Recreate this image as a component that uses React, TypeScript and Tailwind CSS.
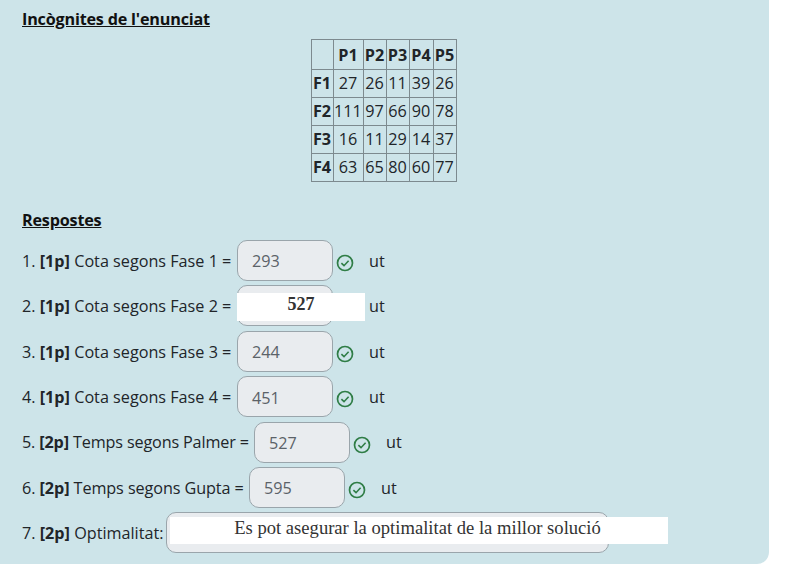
const rows = [
  ["F1", "27", "26", "11", "39", "26"],
  ["F2", "111", "97", "66", "90", "78"],
  ["F3", "16", "11", "29", "14", "37"],
  ["F4", "63", "65", "80", "60", "77"],
];
const heads = ["", "P1", "P2", "P3", "P4", "P5"];
const widths = ["w-[22px]", "w-[30px]", "w-[23px]", "w-[23px]", "w-[24px]", "w-[23px]"];

function Check() {
  return (
    <svg width="18" height="18" viewBox="0 0 18 18" fill="none" className="shrink-0 mt-[5px]">
      <circle cx="9" cy="9" r="7.5" stroke="#2f7d46" strokeWidth="1.7" />
      <path d="M5.4 9.2 L8 11.7 L12.6 6.8" stroke="#2f7d46" strokeWidth="1.6" />
    </svg>
  );
}

function Row({ n, p, label, value, cover, labelClass }: { n: number; p: string; label: string; value: string; cover?: boolean; labelClass: string }) {
  return (
    <div className="flex items-center h-[41px] whitespace-nowrap">
      <span className={`pt-[1px] ${labelClass}`}>
        {n}. <b>[{p}p]</b> {label}
      </span>
      <div className="relative ml-[5px] flex items-center">
        <div className="w-[96px] h-[41px] rounded-[10px] border border-[#9aa5ab] bg-[#e9ecef] pl-[14px] pt-[2px] flex items-center text-[#5b6268]">
          {value}
        </div>
        {cover ? (
          <div className="absolute left-0 top-[8px] w-[128px] h-[28px] bg-white flex items-center justify-center font-['Liberation_Serif',serif] font-bold text-[#333] text-[18px] pb-[6px]">
            527
          </div>
        ) : null}
      </div>
      <div className="w-[36px] pl-[3px] flex">{cover ? null : <Check />}</div>
      <span className="pt-[1px]">ut</span>
    </div>
  );
}

export default function App() {
  return (
    <div className="w-[795px] h-[564px] bg-white overflow-hidden font-['Open_Sans',sans-serif] text-[16.2px] text-[#212529]">
      <div className="w-[769px] h-[564px] bg-[#cde4e9] rounded-br-[12px] pl-[22px] pt-[8px]">
        <h2 className="font-bold underline leading-[22px] text-[#111] -tracking-[0.2px]">Incògnites de l'enunciat</h2>
        <div className="flex justify-center pr-[24px] mt-[9px]">
          <table className="border-collapse text-center">
            <thead>
              <tr className="h-[30px]">
                {heads.map((h, i) => (
                  <th key={i} className={`border border-[#7d8a8f] p-0 pt-[1px] font-bold ${widths[i]}`}>{h}</th>
                ))}
              </tr>
            </thead>
            <tbody>
              {rows.map((r) => (
                <tr key={r[0]} className="h-[28px]">
                  {r.map((c, i) =>
                    i === 0 ? (
                      <th key={i} className="border border-[#7d8a8f] p-0 font-bold">{c}</th>
                    ) : (
                      <td key={i} className="border border-[#7d8a8f] p-0">{c}</td>
                    ),
                  )}
                </tr>
              ))}
            </tbody>
          </table>
        </div>
        <h2 className="font-bold underline leading-[22px] text-[#111] mt-[27px] -tracking-[0.2px]">Respostes</h2>
        <div className="mt-[9px] flex flex-col gap-[4.4px]">
          <Row n={1} p="1" label="Cota segons Fase 1 =" value="293" labelClass="w-[210px]" />
          <Row n={2} p="1" label="Cota segons Fase 2 =" value="" cover labelClass="w-[210px]" />
          <Row n={3} p="1" label="Cota segons Fase 3 =" value="244" labelClass="w-[210px]" />
          <Row n={4} p="1" label="Cota segons Fase 4 =" value="451" labelClass="w-[210px]" />
          <Row n={5} p="2" label="Temps segons Palmer =" value="527" labelClass="w-[227px] -tracking-[0.15px]" />
          <Row n={6} p="2" label="Temps segons Gupta =" value="595" labelClass="w-[222px] -tracking-[0.08px]" />
          <div className="flex items-center h-[41px] whitespace-nowrap">
            <span className="pt-[1px] w-[144px]">
              7. <b>[2p]</b> Optimalitat:
            </span>
            <div className="relative w-[443px] h-[41px] rounded-[10px] border border-[#9aa5ab] bg-[#e9ecef]">
              <div className="absolute left-[3px] top-[4px] w-[498px] h-[27px] bg-white flex items-center justify-center font-['Liberation_Serif',serif] text-[#333] text-[18.6px] pb-[6px] pr-[3px]">
                Es pot asegurar la optimalitat de la millor solució
              </div>
            </div>
          </div>
        </div>
      </div>
    </div>
  );
}
